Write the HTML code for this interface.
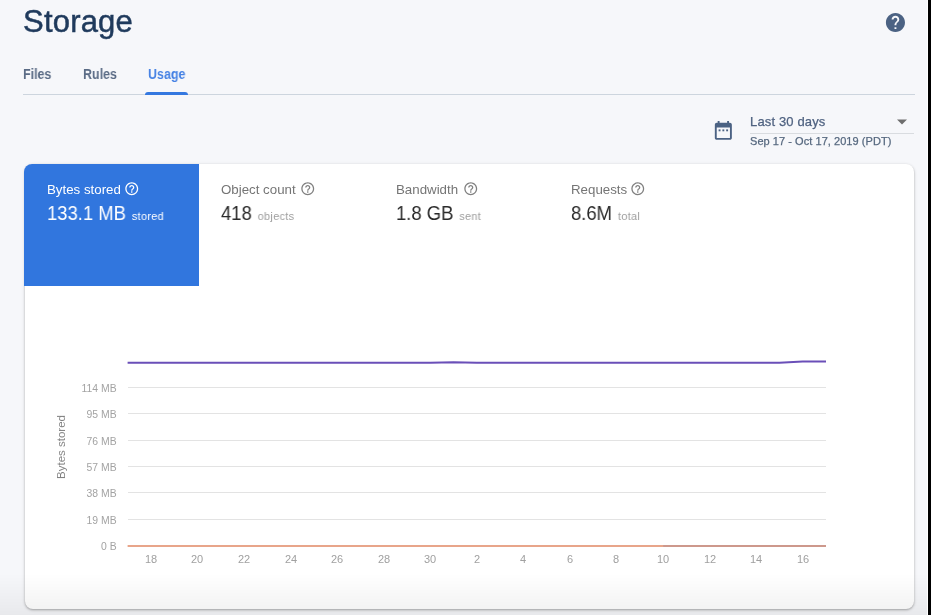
<!DOCTYPE html>
<html><head><meta charset="utf-8"><title>Storage</title><style>
*{margin:0;padding:0;box-sizing:border-box}
html,body{width:931px;height:615px;overflow:hidden;background:#f6f7fa;font-family:"Liberation Sans",sans-serif}
.a{position:absolute;white-space:nowrap;will-change:transform}
svg.a{will-change:auto}
</style></head>
<body>
<div class="a" style="left:23px;top:6.26px;font-size:31px;line-height:31px;color:#1f3a5c;font-weight:normal;letter-spacing:0.2px;-webkit-text-stroke:.5px #1f3a5c">Storage</div>
<svg class="a" style="left:884.1px;top:11.1px" width="22.9" height="22.9" viewBox="0 0 24 24"><path fill="#4b6283" d="M12 2C6.48 2 2 6.48 2 12s4.48 10 10 10 10-4.48 10-10S17.52 2 12 2zm1 17h-2v-2h2v2zm2.07-7.75l-.9.92C13.45 12.9 13 13.5 13 15h-2v-.5c0-1.100.45-2.100 1.170-2.830l1.240-1.260c.37-.36.59-.86.59-1.410 0-1.100-.9-2-2-2s-2 .9-2 2H8c0-2.210 1.790-4 4-4s4 1.790 4 4c0 .88-.36 1.680-.93 2.250z"/></svg>
<div class="a" style="left:23.2px;top:67.05px;font-size:14px;line-height:14px;color:#5a6b85;font-weight:bold;transform:scaleX(.89);transform-origin:0 0">Files</div>
<div class="a" style="left:83px;top:67.05px;font-size:14px;line-height:14px;color:#5a6b85;font-weight:bold;transform:scaleX(.89);transform-origin:0 0">Rules</div>
<div class="a" style="left:147.5px;top:67.05px;font-size:14px;line-height:14px;color:#4682e4;font-weight:bold;transform:scaleX(.89);transform-origin:0 0">Usage</div>
<div class="a" style="left:23px;top:94px;width:892px;height:1px;background:#cdd5de"></div>
<div class="a" style="left:145px;top:92px;width:43px;height:3px;background:#3478e0;border-radius:3px 3px 0 0"></div>
<svg class="a" style="left:712.2px;top:118.6px" width="22.7" height="22.7" viewBox="0 0 24 24"><path fill="#4b6283" d="M19 4h-1V2h-2v2H8V2H6v2H5c-1.110 0-1.990.9-1.990 2L3 20c0 1.100.89 2 2 2h14c1.100 0 2-.9 2-2V6c0-1.100-.9-2-2-2zm0 16H5V9h14v11z"/><rect x="7" y="11" width="2" height="2" fill="#4b6283"/><rect x="11" y="11" width="2" height="2" fill="#4b6283"/><rect x="15" y="11" width="2" height="2" fill="#4b6283"/></svg>
<div class="a" style="left:750.0px;top:115.20px;font-size:13px;line-height:13px;color:#4f6280;font-weight:normal;-webkit-text-stroke:0.25px #4f6280;letter-spacing:.15px">Last 30 days</div>
<div class="a" style="left:750px;top:133px;width:164px;height:1px;background:#d9dce0"></div>
<div class="a" style="left:749.8px;top:135.89px;font-size:11px;line-height:11px;color:#56687f;font-weight:normal;-webkit-text-stroke:0.25px #56687f;letter-spacing:.05px">Sep 17 - Oct 17, 2019 (PDT)</div>
<svg class="a" style="left:897px;top:119px" width="10" height="6" viewBox="0 0 10 5"><path d="M0 0h10L5 5z" fill="#6e6e6e"/></svg>
<div class="a" style="left:24.5px;top:164.3px;width:889px;height:445px;background:#fff;border-radius:8px;box-shadow:0 1px 2px rgba(0,0,0,.22),0 1px 3px 1px rgba(0,0,0,.1)"></div>
<div class="a" style="left:24.2px;top:164.0px;width:175px;height:121.6px;background:#3176de;border-radius:8px 0 0 0"></div>
<div class="a" style="left:46.7px;top:182.84px;font-size:13.3px;line-height:13.3px;color:#ffffff;font-weight:normal;">Bytes stored</div>
<svg class="a" style="left:124.35px;top:180.95px" width="15.5" height="15.5" viewBox="0 0 24 24"><path fill="#ffffff" d="M11 18h2v-2h-2v2zm1-16C6.48 2 2 6.48 2 12s4.48 10 10 10 10-4.48 10-10S17.52 2 12 2zm0 18c-4.410 0-8-3.590-8-8s3.590-8 8-8 8 3.590 8 8-3.590 8-8 8zm0-14c-2.210 0-4 1.790-4 4h2c0-1.100.9-2 2-2s2 .9 2 2c0 2-3 1.750-3 5h2c0-2.250 3-2.500 3-5 0-2.210-1.790-4-4-4z"/></svg>
<div class="a" style="left:46.7px;top:203.99px;font-size:19.5px;line-height:19.5px;color:#ffffff;transform:scaleX(.945);transform-origin:0 0">133.1 MB<span style="font-size:11.6px;color:#ffffff;margin-left:6.3px;letter-spacing:.3px">stored</span></div>
<div class="a" style="left:221.2px;top:182.84px;font-size:13.3px;line-height:13.3px;color:#757575;font-weight:normal;">Object count</div>
<svg class="a" style="left:300.45px;top:180.95px" width="15.5" height="15.5" viewBox="0 0 24 24"><path fill="#808080" d="M11 18h2v-2h-2v2zm1-16C6.48 2 2 6.48 2 12s4.48 10 10 10 10-4.48 10-10S17.52 2 12 2zm0 18c-4.410 0-8-3.590-8-8s3.590-8 8-8 8 3.590 8 8-3.590 8-8 8zm0-14c-2.210 0-4 1.790-4 4h2c0-1.100.9-2 2-2s2 .9 2 2c0 2-3 1.750-3 5h2c0-2.250 3-2.500 3-5 0-2.210-1.790-4-4-4z"/></svg>
<div class="a" style="left:221.2px;top:203.99px;font-size:19.5px;line-height:19.5px;color:#2a2a2a;transform:scaleX(.945);transform-origin:0 0">418<span style="font-size:11.6px;color:#9e9e9e;margin-left:6.3px;letter-spacing:.3px">objects</span></div>
<div class="a" style="left:396.2px;top:182.84px;font-size:13.3px;line-height:13.3px;color:#757575;font-weight:normal;">Bandwidth</div>
<svg class="a" style="left:463.15px;top:180.95px" width="15.5" height="15.5" viewBox="0 0 24 24"><path fill="#808080" d="M11 18h2v-2h-2v2zm1-16C6.48 2 2 6.48 2 12s4.48 10 10 10 10-4.48 10-10S17.52 2 12 2zm0 18c-4.410 0-8-3.590-8-8s3.590-8 8-8 8 3.590 8 8-3.590 8-8 8zm0-14c-2.210 0-4 1.790-4 4h2c0-1.100.9-2 2-2s2 .9 2 2c0 2-3 1.750-3 5h2c0-2.250 3-2.500 3-5 0-2.210-1.790-4-4-4z"/></svg>
<div class="a" style="left:396.2px;top:203.99px;font-size:19.5px;line-height:19.5px;color:#2a2a2a;transform:scaleX(.945);transform-origin:0 0">1.8 GB<span style="font-size:11.6px;color:#9e9e9e;margin-left:6.3px;letter-spacing:.3px">sent</span></div>
<div class="a" style="left:571.2px;top:182.84px;font-size:13.3px;line-height:13.3px;color:#757575;font-weight:normal;">Requests</div>
<svg class="a" style="left:630.25px;top:180.95px" width="15.5" height="15.5" viewBox="0 0 24 24"><path fill="#808080" d="M11 18h2v-2h-2v2zm1-16C6.48 2 2 6.48 2 12s4.48 10 10 10 10-4.48 10-10S17.52 2 12 2zm0 18c-4.410 0-8-3.590-8-8s3.590-8 8-8 8 3.590 8 8-3.590 8-8 8zm0-14c-2.210 0-4 1.790-4 4h2c0-1.100.9-2 2-2s2 .9 2 2c0 2-3 1.750-3 5h2c0-2.250 3-2.500 3-5 0-2.210-1.790-4-4-4z"/></svg>
<div class="a" style="left:571.2px;top:203.99px;font-size:19.5px;line-height:19.5px;color:#2a2a2a;transform:scaleX(.945);transform-origin:0 0">8.6M<span style="font-size:11.6px;color:#9e9e9e;margin-left:6.3px;letter-spacing:.3px">total</span></div>
<div class="a" style="left:127.5px;top:387.00px;width:698px;height:1px;background:#e3e3e3"></div>
<div class="a" style="left:0;width:116.6px;text-align:right;top:384.00px;font-size:10.4px;line-height:10.4px;color:#a3a3a3">114 MB</div>
<div class="a" style="left:127.5px;top:413.30px;width:698px;height:1px;background:#e3e3e3"></div>
<div class="a" style="left:0;width:116.6px;text-align:right;top:410.30px;font-size:10.4px;line-height:10.4px;color:#a3a3a3">95 MB</div>
<div class="a" style="left:127.5px;top:439.60px;width:698px;height:1px;background:#e3e3e3"></div>
<div class="a" style="left:0;width:116.6px;text-align:right;top:436.60px;font-size:10.4px;line-height:10.4px;color:#a3a3a3">76 MB</div>
<div class="a" style="left:127.5px;top:465.90px;width:698px;height:1px;background:#e3e3e3"></div>
<div class="a" style="left:0;width:116.6px;text-align:right;top:462.90px;font-size:10.4px;line-height:10.4px;color:#a3a3a3">57 MB</div>
<div class="a" style="left:127.5px;top:492.20px;width:698px;height:1px;background:#e3e3e3"></div>
<div class="a" style="left:0;width:116.6px;text-align:right;top:489.20px;font-size:10.4px;line-height:10.4px;color:#a3a3a3">38 MB</div>
<div class="a" style="left:127.5px;top:518.50px;width:698px;height:1px;background:#e3e3e3"></div>
<div class="a" style="left:0;width:116.6px;text-align:right;top:515.50px;font-size:10.4px;line-height:10.4px;color:#a3a3a3">19 MB</div>
<div class="a" style="left:127.5px;top:544.80px;width:698px;height:1px;background:#e3e3e3"></div>
<div class="a" style="left:0;width:116.6px;text-align:right;top:541.80px;font-size:10.4px;line-height:10.4px;color:#a3a3a3">0 B</div>
<div class="a" style="left:130.88px;width:40px;text-align:center;top:553.59px;font-size:11px;line-height:11px;color:#a0a0a0">18</div>
<div class="a" style="left:177.44px;width:40px;text-align:center;top:553.59px;font-size:11px;line-height:11px;color:#a0a0a0">20</div>
<div class="a" style="left:224.00px;width:40px;text-align:center;top:553.59px;font-size:11px;line-height:11px;color:#a0a0a0">22</div>
<div class="a" style="left:270.56px;width:40px;text-align:center;top:553.59px;font-size:11px;line-height:11px;color:#a0a0a0">24</div>
<div class="a" style="left:317.12px;width:40px;text-align:center;top:553.59px;font-size:11px;line-height:11px;color:#a0a0a0">26</div>
<div class="a" style="left:363.68px;width:40px;text-align:center;top:553.59px;font-size:11px;line-height:11px;color:#a0a0a0">28</div>
<div class="a" style="left:410.24px;width:40px;text-align:center;top:553.59px;font-size:11px;line-height:11px;color:#a0a0a0">30</div>
<div class="a" style="left:456.80px;width:40px;text-align:center;top:553.59px;font-size:11px;line-height:11px;color:#a0a0a0">2</div>
<div class="a" style="left:503.36px;width:40px;text-align:center;top:553.59px;font-size:11px;line-height:11px;color:#a0a0a0">4</div>
<div class="a" style="left:549.92px;width:40px;text-align:center;top:553.59px;font-size:11px;line-height:11px;color:#a0a0a0">6</div>
<div class="a" style="left:596.48px;width:40px;text-align:center;top:553.59px;font-size:11px;line-height:11px;color:#a0a0a0">8</div>
<div class="a" style="left:643.04px;width:40px;text-align:center;top:553.59px;font-size:11px;line-height:11px;color:#a0a0a0">10</div>
<div class="a" style="left:689.60px;width:40px;text-align:center;top:553.59px;font-size:11px;line-height:11px;color:#a0a0a0">12</div>
<div class="a" style="left:736.16px;width:40px;text-align:center;top:553.59px;font-size:11px;line-height:11px;color:#a0a0a0">14</div>
<div class="a" style="left:782.72px;width:40px;text-align:center;top:553.59px;font-size:11px;line-height:11px;color:#a0a0a0">16</div>
<div class="a" style="left:21px;top:440.9px;width:80px;height:12px;text-align:center;font-size:11.5px;line-height:12px;color:#828282;transform:rotate(-90deg)">Bytes stored</div>
<svg class="a" style="left:0;top:0;filter:blur(.4px)" width="931" height="615" viewBox="0 0 931 615">
<polyline points="127.60,362.65 150.88,362.65 174.16,362.65 197.44,362.65 220.72,362.65 244.00,362.65 267.28,362.65 290.56,362.65 313.84,362.65 337.12,362.65 360.40,362.65 383.68,362.65 406.96,362.65 430.24,362.65 453.52,362.20 476.80,362.65 500.08,362.65 523.36,362.65 546.64,362.65 569.92,362.65 593.20,362.65 616.48,362.65 639.76,362.65 663.04,362.65 686.32,362.65 709.60,362.65 732.88,362.65 756.16,362.65 779.44,362.65 802.72,361.40 826.00,361.40" fill="none" stroke="#6a4fb8" stroke-width="2"/>
<line x1="127.6" y1="546.1" x2="663.04" y2="546.1" stroke="#e8a58a" stroke-width="2"/>
<line x1="663.04" y1="546.1" x2="826.00" y2="546.1" stroke="#cd988c" stroke-width="2"/>
</svg>
<div class="a" style="left:0;top:574px;width:931px;height:41px;background:linear-gradient(rgba(0,0,0,0),rgba(0,0,0,.055))"></div>
<div class="a" style="left:927px;top:0;width:1px;height:615px;background:#fff"></div>
<div class="a" style="left:928px;top:0;width:3px;height:615px;background:#000"></div>
</body></html>
